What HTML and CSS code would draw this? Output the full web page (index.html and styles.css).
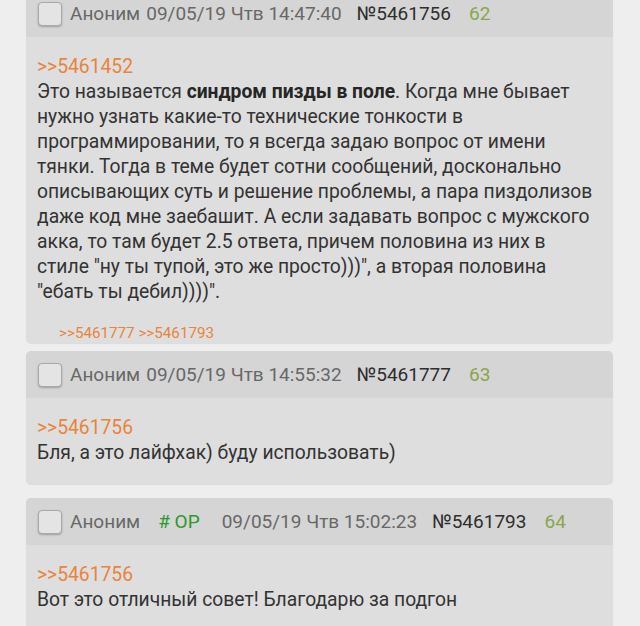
FILE: index.html
```html
<!DOCTYPE html>
<html>
<head>
<meta charset="utf-8">
<link rel="stylesheet" href="styles.css">
</head>
<body>
<div class="thread">
  <div class="post first">
    <div class="head">
      <span class="cb"></span>
      <span class="name">Аноним</span>
      <span class="date">09/05/19 Чтв 14:47:40</span>
      <span class="num">№5461756</span>
      <span class="idx">62</span>
    </div>
    <div class="body">
      <div class="ref">&gt;&gt;5461452</div>
      <div class="text">Это называется <b>синдром пизды в поле</b>. Когда мне бывает<br>нужно узнать какие-то технические тонкости в<br>программировании, то я всегда задаю вопрос от имени<br>тянки. Тогда в теме будет сотни сообщений, досконально<br>описывающих суть и решение проблемы, а пара пиздолизов<br>даже код мне заебашит. А если задавать вопрос с мужского<br>акка, то там будет 2.5 ответа, причем половина из них в<br>стиле "ну ты тупой, это же просто)))", а вторая половина<br>"ебать ты дебил))))".</div>
      <div class="replies">&gt;&gt;5461777 &gt;&gt;5461793</div>
    </div>
  </div>
  <div class="post">
    <div class="head">
      <span class="cb"></span>
      <span class="name">Аноним</span>
      <span class="date">09/05/19 Чтв 14:55:32</span>
      <span class="num">№5461777</span>
      <span class="idx">63</span>
    </div>
    <div class="body">
      <div class="ref">&gt;&gt;5461756</div>
      <div class="text">Бля, а это лайфхак) буду использовать)</div>
    </div>
  </div>
  <div class="post">
    <div class="head">
      <span class="cb"></span>
      <span class="name">Аноним</span>
      <span class="op"># OP</span>
      <span class="date">09/05/19 Чтв 15:02:23</span>
      <span class="num">№5461793</span>
      <span class="idx">64</span>
    </div>
    <div class="body">
      <div class="ref">&gt;&gt;5461756</div>
      <div class="text">Вот это отличный совет! Благодарю за подгон</div>
    </div>
  </div>
</div>
</body>
</html>
```
FILE: styles.css
```css
html, body {
  margin: 0;
  padding: 0;
  background: #eeeeee;
  overflow: hidden;
}
body {
  font-family: Roboto, "Noto Sans", sans-serif;
  height: 626px;
}
.thread {
  display: flex;
  flex-direction: column;
  gap: 8px;
  padding: 0 27px 0 26px;
  margin-top: -10px;
}
.post {
  background: #dedede;
  border-radius: 5px;
  overflow: hidden;
  box-shadow: 0 1px 1px rgba(0,0,0,0.08);
}
.post + .post + .post { margin-top: 6px; }
.head {
  background: #d5d5d5;
  height: 47px;
  display: flex;
  align-items: center;
  padding-left: 12px;
  font-size: 19px;
  color: #686868;
}
.cb {
  width: 22px;
  height: 22px;
  border: 1px solid #a9a9a9;
  border-radius: 4px;
  background: #e4e4e4;
  box-shadow: 0 1px 2px rgba(0,0,0,0.25);
  margin-right: 8px;
  flex: none;
}
.name { margin-right: 6px; }
.op { color: #2b9a2b; margin-left: 18px; margin-right: 22px; }
.post:last-child .name { margin-right: 0; }
.date { margin-right: 15px; }
.num { color: #2e2e2e; margin-right: 18px; }
.idx { color: #8aa54a; }
.body {
  padding: 17px 8px 19px 11px;
  font-size: 19.3px;
  line-height: 25px;
  color: #333333;
}
.ref { color: #e8843c; }
.text b { font-weight: 700; color: #262626; }
.replies {
  color: #e8843c;
  font-size: 15.2px;
  line-height: 20px;
  margin-top: 19px;
  padding-left: 22px;
  margin-bottom: -19px;
}
```
